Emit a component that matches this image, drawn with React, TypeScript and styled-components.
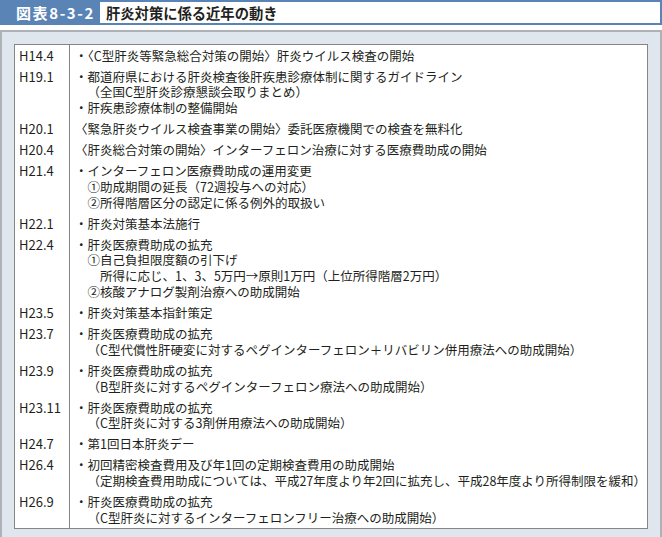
import React from "react";
import styled, { createGlobalStyle } from "styled-components";

const Global = createGlobalStyle`
  html, body { margin: 0; padding: 0; background: #ffffff; }
  body { font-family: "Noto Sans CJK JP", "Noto Sans", sans-serif; color: #231f20; }
`;

const Page = styled.div`
  width: 662px;
  height: 537px;
  display: flex;
  flex-direction: column;
  gap: 5px;
  box-sizing: border-box;
`;

const Header = styled.div`
  display: flex;
  height: 26px;
  box-sizing: border-box;
  border: 2px solid #5b84b6;
  border-left-width: 0;
  background: #ffffff;
`;

const Label = styled.div`
  width: 100px;
  background: #5b84b6;
  color: #ffffff;
  font-weight: 700;
  font-size: 15px;
  display: flex;
  align-items: center;
  padding-left: 16px;
  box-sizing: border-box;
  letter-spacing: 1.6px;
`;

const Title = styled.div`
  font-weight: 700;
  font-size: 14.3px;
  display: flex;
  align-items: center;
  padding-left: 6px;
  color: #231f20;
`;

const Panel = styled.div`
  flex: 1;
  background: #dfe6ee;
  border: 2px solid #aeb2b6;
  margin-bottom: 1px;
  padding: 12px;
  box-sizing: border-box;
  display: flex;
`;

const Table = styled.div`
  flex: 1;
  background: #ffffff;
  border: 1px solid #858585;
  display: grid;
  grid-template-columns: 55px 1fr;
  align-content: start;
  font-size: 12.5px;
  line-height: 15.8px;
`;

const DateCell = styled.div`
  border-right: 1px solid #858585;
  padding: 2.6px 0 2.6px 4px;
  white-space: nowrap;
  font-size: 13px;
`;

const Content = styled.div`
  padding: 2.6px 0 2.6px 5px;
  white-space: nowrap;
`;

const Line = styled.div<{ $indent?: number }>`
  padding-left: ${(p) => (p.$indent ?? 0) * 12.5}px;
`;

type Row = { date: string; lines: [string, number?][] };

const rows: Row[] = [
  { date: "H14.4", lines: [["・〈C型肝炎等緊急総合対策の開始〉肝炎ウイルス検査の開始"]] },
  {
    date: "H19.1",
    lines: [
      ["・都道府県における肝炎検査後肝疾患診療体制に関するガイドライン"],
      ["（全国C型肝炎診療懇談会取りまとめ）", 1],
      ["・肝疾患診療体制の整備開始"],
    ],
  },
  { date: "H20.1", lines: [["〈緊急肝炎ウイルス検査事業の開始〉委託医療機関での検査を無料化"]] },
  { date: "H20.4", lines: [["〈肝炎総合対策の開始〉インターフェロン治療に対する医療費助成の開始"]] },
  {
    date: "H21.4",
    lines: [
      ["・インターフェロン医療費助成の運用変更"],
      ["①助成期間の延長（72週投与への対応）", 1],
      ["②所得階層区分の認定に係る例外的取扱い", 1],
    ],
  },
  { date: "H22.1", lines: [["・肝炎対策基本法施行"]] },
  {
    date: "H22.4",
    lines: [
      ["・肝炎医療費助成の拡充"],
      ["①自己負担限度額の引下げ", 1],
      ["所得に応じ、1、3、5万円→原則1万円（上位所得階層2万円）", 2],
      ["②核酸アナログ製剤治療への助成開始", 1],
    ],
  },
  { date: "H23.5", lines: [["・肝炎対策基本指針策定"]] },
  {
    date: "H23.7",
    lines: [
      ["・肝炎医療費助成の拡充"],
      ["（C型代償性肝硬変に対するペグインターフェロン＋リバビリン併用療法への助成開始）", 1],
    ],
  },
  {
    date: "H23.9",
    lines: [
      ["・肝炎医療費助成の拡充"],
      ["（B型肝炎に対するペグインターフェロン療法への助成開始）", 1],
    ],
  },
  {
    date: "H23.11",
    lines: [
      ["・肝炎医療費助成の拡充"],
      ["（C型肝炎に対する3剤併用療法への助成開始）", 1],
    ],
  },
  { date: "H24.7", lines: [["・第1回日本肝炎デー"]] },
  {
    date: "H26.4",
    lines: [
      ["・初回精密検査費用及び年1回の定期検査費用の助成開始"],
      ["（定期検査費用助成については、平成27年度より年2回に拡充し、平成28年度より所得制限を緩和）", 1],
    ],
  },
  {
    date: "H26.9",
    lines: [
      ["・肝炎医療費助成の拡充"],
      ["（C型肝炎に対するインターフェロンフリー治療への助成開始）", 1],
    ],
  },
];

export default function App() {
  return (
    <Page>
      <Global />
      <Header>
        <Label>図表8-3-2</Label>
        <Title>肝炎対策に係る近年の動き</Title>
      </Header>
      <Panel>
        <Table>
          {rows.map((r) => (
            <React.Fragment key={r.date}>
              <DateCell>{r.date}</DateCell>
              <Content>
                {r.lines.map(([t, ind], i) => (
                  <Line key={i} $indent={ind}>
                    {t}
                  </Line>
                ))}
              </Content>
            </React.Fragment>
          ))}
        </Table>
      </Panel>
    </Page>
  );
}
